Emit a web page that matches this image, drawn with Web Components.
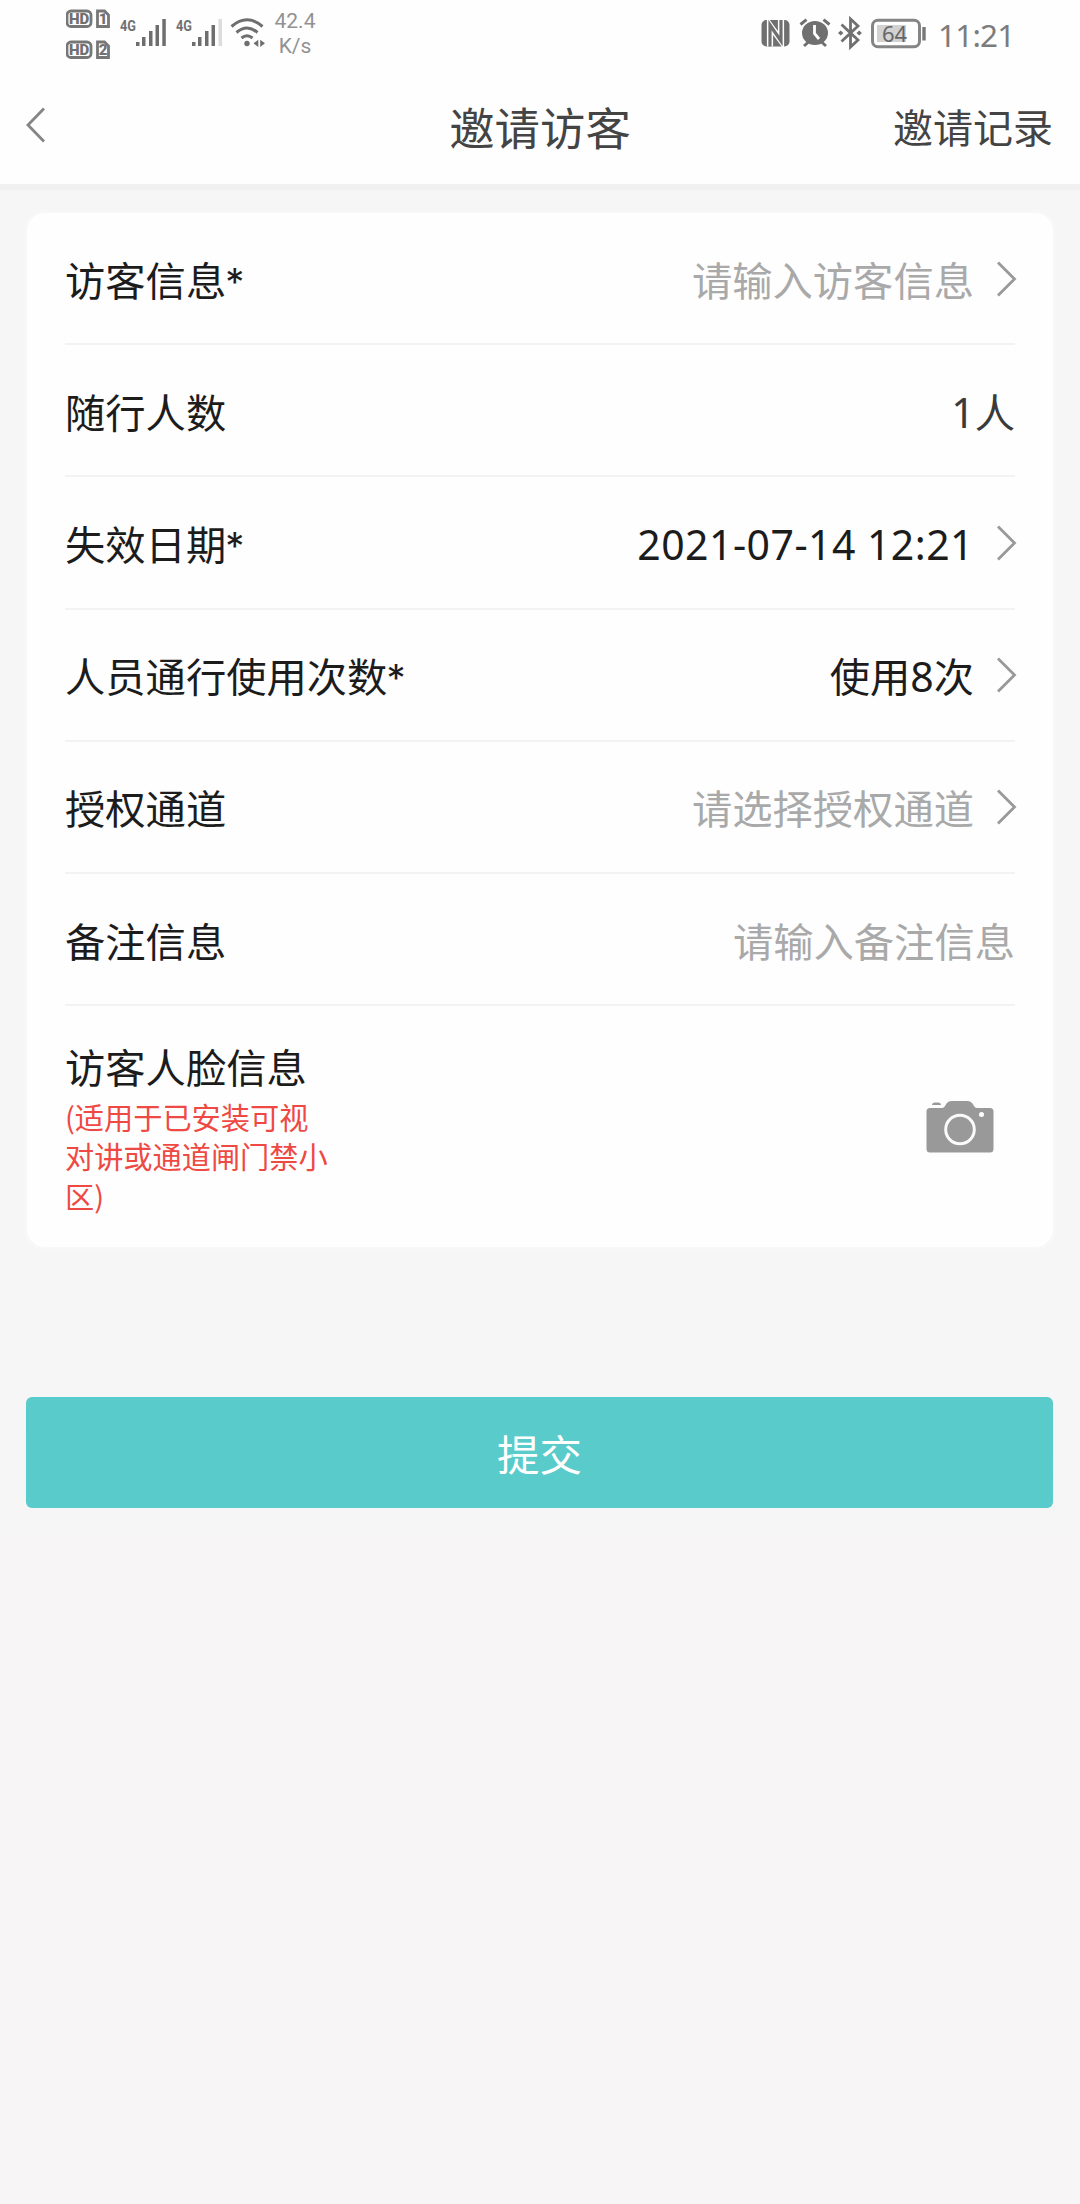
<!DOCTYPE html>
<html lang="zh-CN">
<head>
<meta charset="utf-8">
<title>邀请访客</title>
<style>
html,body{margin:0;padding:0}
body{font-family:"Noto Sans CJK SC","Noto Sans",sans-serif;background:#f6f6f6;color:#1c1c1c}
</style>
</head>
<body>
<visitor-page></visitor-page>
<script>
function define(name, html) {
  const template = document.createElement('template');
  template.innerHTML = html;
  customElements.define(name, class extends HTMLElement {
    constructor() {
      super();
      this.attachShadow({ mode: 'open' }).appendChild(template.content.cloneNode(true));
    }
  });
}

define('status-bar', `
<style>
:host{display:flex;height:68px;padding:0 66px;justify-content:space-between;box-sizing:border-box;color:#8c8c8c}
.side{display:flex}
svg{display:block;flex:none}
.rate{font:21px/25px Roboto,sans-serif;text-align:center;padding-top:9px;width:44px;margin-left:7px;color:#929292}
.time{font:31.5px/69px "Noto Sans",sans-serif;color:#7c7c7c;letter-spacing:-.8px;text-align:right;width:76px}
</style>
<div class="side">
<svg width="200" height="68" viewBox="66 0 200 68">
  <g fill="none" stroke="#777" stroke-width="2.8">
    <rect x="67" y="11" width="24" height="15.500" rx="4"/><path d="M97.500 11h7l4 4v11.500h-11z"/>
    <rect x="67" y="42" width="24" height="15.500" rx="4"/><path d="M97.500 42h7l4 4v11.500h-11z"/>
  </g>
  <g font-family="Roboto" font-weight="900" fill="#707070" text-anchor="middle">
    <text x="79" y="24" font-size="15">HD</text><text x="103" y="24" font-size="15">1</text>
    <text x="79" y="55" font-size="15">HD</text><text x="103" y="55" font-size="15">2</text>
    <text x="128" y="31" font-size="15.500" font-weight="700" textLength="16" lengthAdjust="spacingAndGlyphs">4G</text>
    <text x="184" y="31" font-size="15.500" font-weight="700" textLength="16" lengthAdjust="spacingAndGlyphs">4G</text>
  </g>
  <g fill="#6e6e6e">
    <path d="M136 42h3.5v4H136zM142 37h3.5v9H142zM149 31h3.5v15H149zM155.5 25h3.5v21h-3.5zM162.3 19h3.5v27h-3.5z"/>
    <path d="M192 42h3.5v4H192zM198 37h3.5v9H198zM205 31h3.5v15H205zM211.5 25h3.5v21h-3.5z"/>
    <path d="M218.5 19h3.5v27h-3.5z" fill="#dcdcdc"/>
    <circle cx="247" cy="43.5" r="2.7"/>
    <path d="M253.5 43.3l4.8-3.6v7.2zM265 43.3l-4.8-3.6v7.2z"/>
  </g>
  <g fill="none" stroke="#6e6e6e" stroke-width="3">
    <path d="M231.500 26.500Q247 13 262.500 26.500M236.500 32.500Q247 23.500 257.500 32.500M241.500 38Q247 33.500 252.500 38"/>
  </g>
</svg>
<div class="rate">42.4<br>K/s</div>
</div>
<div class="side">
<svg width="178" height="68" viewBox="760 0 178 68">
  <rect x="761.5" y="20" width="28" height="26.500" rx="5" fill="#707070"/>
  <path d="M770 46.500V25.500L781 40.500V20" fill="none" stroke="#fff" stroke-width="6.200"/>
  <path d="M770 46.500V25L781 41V20" fill="none" stroke="#707070" stroke-width="3.200"/>
  <g fill="none" stroke="#707070" stroke-width="3">
    <path d="M800.5 24.5l6-4.8M829.5 24.5l-6-4.8M804 46l5-4.500M826 46l-5-4.500"/>
  </g>
  <ellipse cx="815" cy="33" rx="13" ry="12" fill="#707070"/>
  <path d="M814.500 25v8.5l4.500 5.500" fill="none" stroke="#fff" stroke-width="2.8"/>
  <path d="M841.5 24.5L858 40l-7.500 7V19l7.500 7-16.500 15.500" fill="none" stroke="#707070" stroke-width="2.8"/>
  <path d="M838 33l2.700-2.500 2.700 2.500-2.700 2.500zM856.500 33l2.700-2.500 2.700 2.500-2.700 2.500z" fill="#707070"/>
  <rect x="872.5" y="20.300" width="47" height="26.400" rx="5.500" fill="#fff" stroke="#858585" stroke-width="3"/>
  <path d="M877 25h29v17h-29z" fill="#d2d2d2"/>
  <rect x="922.3" y="27" width="3.4" height="13.5" fill="#777"/>
  <text x="894.5" y="41.5" text-anchor="middle" font-family="Noto Sans" font-size="22" fill="#666">64</text>
</svg>
<div class="time">11:21</div>
</div>`);

define('nav-bar', `
<style>
:host{display:grid;grid-template-columns:1fr auto 1fr;align-items:center;height:116px;padding:0 27px 0 24px;color:#444;box-sizing:border-box}
svg{display:block;margin-top:-3px}
.title{font-size:45.4px;line-height:60px;margin:0 -1px 0 2px}
.action{font-size:40px;line-height:60px;justify-self:end}
</style>
<svg width="22" height="36" viewBox="0 0 22 36"><path d="M20 1.5L4 18 20 34.5" fill="none" stroke="#858585" stroke-width="2.800"/></svg>
<div class="title"><slot></slot></div>
<div class="action"><slot name="action"></slot></div>`);

define('form-card', `
<style>
:host{display:block;background:#fefefe;border-radius:18px;height:1034px;padding:0 38px;box-sizing:border-box;box-shadow:0 0 5px #fafafa}
</style><slot></slot>`);

define('form-row', `
<style>
:host{display:flex;height:132.2px;box-sizing:border-box;border-bottom:2px solid #f3f3f3;align-items:center;font-size:40.3px;line-height:60px;white-space:nowrap;padding-top:1px}
.value{margin-left:auto;color:#1c1c1c}
:host([hint]) .value{color:#a9a9a9}
:host([soft]) .value{color:#3a3a3a}
svg{display:none;margin:0 -2px 0 22px}
:host([link]) svg{display:block}
</style>
<div><slot></slot></div><div class="value"><slot name="value"></slot></div>
<svg width="21" height="36" viewBox="0 0 21 36"><path d="M2 1.5L18.5 18 2 34.5" fill="none" stroke="#999" stroke-width="2.800"/></svg>`);

define('face-row', `
<style>
:host{display:flex;justify-content:space-between;padding-top:30px}
.name{font-size:40.3px;line-height:60px}
.note{font-size:29.2px;line-height:39.3px;color:#ee4943;width:270px;margin-top:1px}
svg{display:block;margin:64px 21px 0 0}
</style>
<div><div class="name"><slot></slot></div><div class="note"><slot name="note"></slot></div></div>
<svg width="68" height="54" viewBox="0 0 68 54">
  <path d="M4 8h12q2 0 3-2l1.500-2.500Q22 1 25 1h17q3 0 4.500 2.500L48 6q1 2 3 2h13q3.500 0 3.500 3.500V49q0 3.500-3.500 3.500H4Q.5 52.500.5 49V11.500Q.5 8 4 8z" fill="#999"/>
  <path d="M6 5q0-2.500 3-2.500h3q3 0 3 2.500z" fill="#999"/>
  <circle cx="34" cy="29.500" r="14.300" fill="none" stroke="#fafafa" stroke-width="3"/>
  <circle cx="55.500" cy="14.500" r="2.500" fill="#fff"/>
</svg>`);

define('submit-button', `
<style>
:host{display:block;margin:150px 27px 0 26px}
button{display:flex;align-items:center;justify-content:center;width:100%;height:111px;padding:1px 0 0;border:0;border-radius:6px;background:#58cbca;color:#fff;font:42.500px/60px "Noto Sans CJK SC",sans-serif;box-sizing:border-box}
</style><button><slot></slot></button>`);

define('visitor-page', `
<style>
:host{display:block;height:2204px;overflow:hidden;background:linear-gradient(#f6f6f6 0,#f6f6f6 1400px,#f7f5f6 1600px)}
header{background:#fefefe;height:184px;border-bottom:6px solid #f1f1f1}
form-card{margin:23px 27px 0}
b{font:41px/1 "Noto Sans",sans-serif}
.date{letter-spacing:.45px}
i{font:38px/1 Inter,sans-serif;margin-left:-1px}
</style>
<header><status-bar></status-bar><nav-bar>邀请访客<span slot="action">邀请记录</span></nav-bar></header>
<form-card>
<form-row link hint>访客信息<i>*</i><span slot="value">请输入访客信息</span></form-row>
<form-row soft>随行人数<span slot="value"><b>1</b>人</span></form-row>
<form-row link>失效日期<i>*</i><span slot="value"><b class="date">2021-07-14 12:21</b></span></form-row>
<form-row link>人员通行使用次数<i>*</i><span slot="value">使用<b>8</b>次</span></form-row>
<form-row link hint>授权通道<span slot="value">请选择授权通道</span></form-row>
<form-row hint>备注信息<span slot="value">请输入备注信息</span></form-row>
<face-row>访客人脸信息<span slot="note">(适用于已安装可视<br>对讲或通道闸门禁小<br>区)</span></face-row>
</form-card>
<submit-button>提交</submit-button>`);
</script>
</body>
</html>
